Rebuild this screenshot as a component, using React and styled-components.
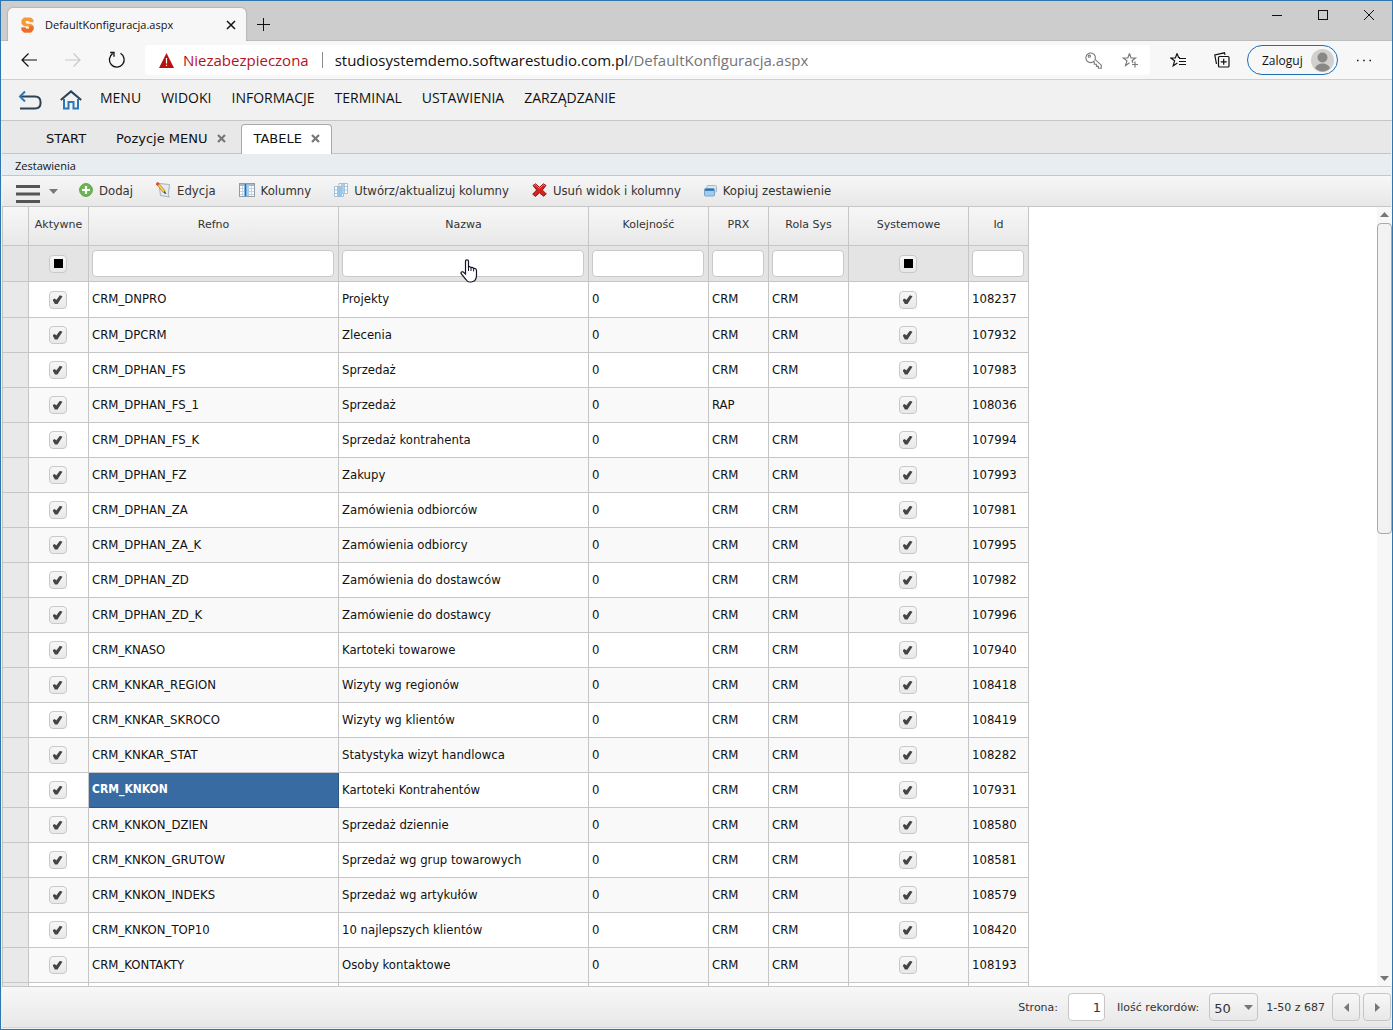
import React from 'react';
import styled, { createGlobalStyle, css } from 'styled-components';

const ui = '"Open Sans", "Noto Sans", sans-serif';
const grid = '"DejaVu Sans Condensed", "DejaVu Sans", sans-serif';
const wide = '"DejaVu Sans", sans-serif';
const line = '#c6c6c6';
const soft = 'linear-gradient(#f7f7f7, #e8e8e8)';

const Global = createGlobalStyle`
  * { box-sizing: border-box; }
  body { margin: 0; font-family: ${ui}; color: #111; }
  button, input, select { font: inherit; color: inherit; margin: 0; }
  button { padding: 0; border: 0; background: none; display: flex; align-items: center; }
  a { color: inherit; text-decoration: none; }
  svg { display: block; flex: none; }
`;

const Window = styled.div`
  display: flex;
  flex-direction: column;
  height: 100vh;
  min-height: 480px;
  overflow: hidden;
  border: 1px solid #2f76b0;
  background: #f0f0f0;
`;

/* ---------- browser frame ---------- */
const TitleBar = styled.header`
  display: flex;
  align-items: flex-end;
  height: 40px;
  flex: none;
  background: #cdcdcd;
  border-bottom: 1px solid #bdbdbd;
`;
const BrowserTab = styled.div`
  display: flex;
  align-items: center;
  width: 238px;
  height: 33px;
  margin: 0 0 -1px 7px;
  padding: 0 8px 0 13px;
  gap: 11px;
  border-radius: 5px 5px 0 0;
  background: #f7f7f7;
  box-shadow: 0 0 2px rgba(0, 0, 0, 0.35);
  clip-path: inset(-4px -4px 0 -4px);
  font-size: 11px;
`;
const TabTitle = styled.span`
  flex: 1;
  white-space: nowrap;
`;
const NewTab = styled.button`
  align-self: flex-end;
  height: 31px;
  margin-left: 11px;
`;
const WindowButtons = styled.div`
  display: flex;
  align-self: flex-start;
  margin-left: auto;
`;
const WindowButton = styled.button`
  justify-content: center;
  width: 46px;
  height: 28px;
`;
const AddressRow = styled.div`
  display: flex;
  align-items: center;
  height: 39px;
  flex: none;
  padding: 0 20px 0 0;
  background: #f7f7f7;
  border-bottom: 1px solid #cfcfcf;
`;
const NavButton = styled.button`
  justify-content: center;
  width: 44px;
  height: 30px;
  &:first-child { margin-left: 6px; }
`;
const AddressBar = styled.div`
  display: flex;
  align-items: center;
  flex: 1;
  height: 30px;
  margin-left: 6px;
  padding: 0 11px 0 14px;
  border-radius: 4px;
  background: #fff;
  font-size: 15px;
  white-space: nowrap;
`;
const Insecure = styled.button`
  gap: 9px;
  color: #b5121b;
`;
const Rule = styled.span`
  width: 1px;
  height: 16px;
  margin: 0 12px 0 13px;
  background: #8c8c8c;
`;
const Url = styled.div`
  flex: 1;
  outline: none;
  overflow: hidden;
`;
const UrlPath = styled.span`
  color: #757575;
`;
const BarIcons = styled.div`
  display: flex;
  align-items: center;
  gap: 20px;
`;
const SideIcons = styled(BarIcons)`
  gap: 28px;
  margin: 0 17px 0 20px;
`;
const SignIn = styled.button`
  justify-content: space-between;
  width: 91px;
  height: 30px;
  padding: 0 3px 0 14px;
  border: 1px solid #1d6cb0;
  border-radius: 15px;
  font-size: 12px;
`;
const More = styled.button`
  margin-left: 18px;
`;

/* ---------- application chrome ---------- */
const MenuBar = styled.nav`
  display: flex;
  align-items: center;
  height: 41px;
  flex: none;
  padding: 0 17px 4px;
  background: #f1f1f1;
  border-bottom: 1px solid ${line};
  font-size: 14px;
`;
const MenuIcon = styled.button`
  margin: 4px 18px 0 0;
`;
const MenuLinks = styled.div`
  display: flex;
  gap: 20px;
  padding-bottom: 2px;
`;
const Tabs = styled.div`
  display: flex;
  height: 33px;
  flex: none;
  padding: 3px 0 0 29px;
  margin: 0 1px;
  background: #e8e8e8;
  border-bottom: 1px solid ${line};
  font: 13px ${wide};
`;
const AppTab = styled.div`
  display: flex;
  align-items: center;
  gap: 9px;
  padding: 0 14px 3px;
  margin-bottom: -1px;
  border: 1px solid transparent;
  border-bottom: 0;
  ${(p) => p.$active && css`
    padding: 0 11px 3px 12px;
    border-color: #a9a9a9;
    border-radius: 4px 4px 0 0;
    background: #fff;
  `}
`;
const Crumb = styled.div`
  height: 22px;
  flex: none;
  margin: 0 1px;
  padding: 1px 13px 0;
  background: #e8edf2;
  border-bottom: 1px solid ${line};
  font-size: 11px;
  line-height: 21px;
`;
const Toolbar = styled.div`
  display: flex;
  align-items: center;
  height: 31px;
  flex: none;
  margin: 0 1px;
  padding: 0 14px;
  gap: 23px;
  background: ${soft};
  border-bottom: 1px solid ${line};
  font: 13px ${grid};
  color: #333;
`;
const ListButton = styled.button`
  gap: 9px;
  margin-right: -2px;
`;
const Tool = styled.button`
  gap: 6px;
  height: 28px;
  padding-bottom: 2px;
`;

/* ---------- grid ---------- */
const GridArea = styled.main`
  display: flex;
  flex: 1;
  min-height: 0;
  margin: 0 0 0 1px;
  background: #fff;
  border-left: 1px solid ${line};
`;
const TableScroll = styled.div`
  flex: 1;
  overflow: hidden;
`;
const Table = styled.table`
  width: 1026px;
  table-layout: fixed;
  border-collapse: separate;
  border-spacing: 0;
  font: 13px ${grid};
`;
const Col = styled.col`
  width: ${(p) => p.$w}px;
`;
const Th = styled.th`
  height: 39px;
  padding: 0 0 3px;
  border: solid ${line};
  border-width: 0 1px 1px 0;
  background: ${soft};
  font: 11px ${wide};
  color: #333;
`;
const FilterCell = styled.td`
  height: 36px;
  padding: 0 4px 0 3px;
  border: solid ${line};
  border-width: 0 1px 1px 0;
  background: #e4e4e4;
  text-align: center;
`;
const FilterInput = styled.input`
  display: block;
  width: 100%;
  height: 27px;
  padding: 0 5px;
  border: 1px solid #c9c9c9;
  border-radius: 4px;
  background: #fff;
`;
const Row = styled.tr`
  background: #fff;
  &:nth-child(even) { background: #f9f9f9; }
`;
const Cell = styled.td`
  height: 35px;
  padding: ${(p) => (p.$center ? '0 2px 0 0' : '0 3px 2px')};
  border: solid ${line};
  border-width: 0 1px 1px 0;
  white-space: nowrap;
  text-align: ${(p) => (p.$center ? 'center' : 'left')};
  ${Row}:first-child & { height: 36px; }
  ${(p) => p.$selected && css`
    background: #386ba1;
    border-color: #2c5684;
    color: #fff;
    font-weight: bold;
    font-size: 12px;
  `}
`;
const Marker = styled.td`
  background: #e9e9e9;
  border: solid ${line};
  border-width: 0 1px 1px 0;
`;
const Tick = styled.input.attrs({ type: 'checkbox' })`
  appearance: none;
  display: inline-grid;
  place-items: center;
  width: 18px;
  height: 18px;
  border: 1px solid #c9c9c9;
  border-radius: 4px;
  background: ${soft};
  vertical-align: middle;
  &::before {
    content: '';
    width: ${(p) => (p.$mixed ? 9 : 10)}px;
    height: 9px;
    background: ${(p) => (p.$mixed ? '#000' : '#444')};
  }
  &:checked::before {
    clip-path: polygon(0 54%, 22% 40%, 38% 56%, 74% 2%, 100% 14%, 50% 100%, 24% 100%);
  }
  &:not(:checked)::before { opacity: ${(p) => (p.$mixed ? 1 : 0)}; }
`;
const ScrollBar = styled.div`
  display: flex;
  flex-direction: column;
  align-items: center;
  width: 15px;
  padding: 5px 0;
  background: #f7f7f7;
`;
const Thumb = styled.div`
  width: 100%;
  height: 311px;
  margin: 6px 0 auto;
  border: 1px solid #a8a8a8;
  border-radius: 4px;
  background: #f2f2f2;
`;
const Pointer = styled.span`
  position: absolute;
  top: 9px;
  left: calc(50% - 3px);
  pointer-events: none;
`;
const PointerField = styled.div`
  position: relative;
`;

/* ---------- pager ---------- */
const Pager = styled.footer`
  display: flex;
  align-items: center;
  justify-content: flex-end;
  height: 42px;
  flex: none;
  margin: 0 1px 1px;
  gap: 3px;
  border-top: 1px solid ${line};
  border-bottom: 1px solid #d5d5d5;
  background: ${soft};
  font: 11px ${wide};
  color: #333;
`;
const PageLabel = styled.label`
  display: flex;
  align-items: center;
  gap: 10px;
  margin-right: 9px;
`;
const PageInput = styled.input`
  width: 37px;
  height: 28px;
  padding: 0 3px;
  border: 1px solid #c6c6c6;
  border-radius: 4px;
  background: #fff;
  font-size: 13px;
  text-align: right;
`;
const SizeBox = styled.span`
  display: grid;
  align-items: center;
  width: 49px;
  height: 28px;
  border: 1px solid #c6c6c6;
  border-radius: 4px;
  background: ${soft};
  & > * { grid-area: 1 / 1; }
  & > svg { justify-self: end; margin-right: 4px; pointer-events: none; }
`;
const SizeSelect = styled.select`
  appearance: none;
  width: 100%;
  height: 26px;
  padding: 3px 4px 0;
  border: 0;
  background: none;
  font-size: 13px;
`;
const Range = styled.span`
  margin: 0 4px 0 -4px;
`;
const PageButton = styled.button`
  justify-content: center;
  width: 28px;
  height: 28px;
  border: 1px solid #c6c6c6;
  border-radius: 4px;
  background: ${soft};
`;

/* ---------- icons ---------- */
const Icon = ({ w = 16, h = w, children, color = '#111', sw = 1 }) => (
  <svg width={w} height={h} viewBox={`0 0 ${w} ${h}`} fill="none" stroke={color} strokeWidth={sw} aria-hidden="true">{children}</svg>
);
const Arrow = ({ dir, w = 9, h = 5 }) => {
  const pts = { up: `0,${h} ${w / 2},0 ${w},${h}`, down: `0,0 ${w},0 ${w / 2},${h}`, left: `${w},0 ${w},${h} 0,${h / 2}`, right: `0,0 0,${h} ${w},${h / 2}` };
  return <Icon w={w} h={h}><polygon points={pts[dir]} fill="#777" stroke="none" /></Icon>;
};
const CloseMark = () => <Icon w={9} h={9} color="#777" sw={2.2}><path d="M1 1L8 8M8 1L1 8" /></Icon>;
const Logo = () => (
  <Icon w={13} h={16}>
    <path d="M3 0.5H10L12.5 3V5.2H8.6L8 4H4.8V6L6 6.7H10L12.5 9V12.8L10 15.5H3L0.5 13V10.4H4.4L5 11.8H8.2V10L7 9.2H3L0.5 6.8V3Z" fill="#f59a35" stroke="none" />
    <path d="M0.5 10.4H4.4L5 11.8H8.2V10L7 9.2H12.5V12.8L10 15.5H3L0.5 13Z" fill="#ee6b2c" stroke="none" />
  </Icon>
);
const star = 'M7.5 1.5L9 6H13.5L10 8.8L11 11M7.5 1.5L5.8 6H1.2L4.9 8.8L3.6 13.5L7.5 10.8';

const PlusIcon = () => (
  <Icon w={14} h={14}>
    <circle cx="7" cy="7" r="6.4" fill="#6cb552" stroke="#5ba34a" />
    <path d="M7 3V11M3 7H11" stroke="#fff" strokeWidth="2.2" />
  </Icon>
);
const EditIcon = () => (
  <Icon w={15} h={16}>
    <path d="M3 1.5L13.5 2.5L12.2 13L13.5 15L4.5 13.5Z" fill="#e4ebf2" stroke="#a3b1bf" />
    <path d="M1.5 1.5L8.5 10" stroke="#c98a1c" strokeWidth="3" />
    <path d="M2 2L8.5 10" stroke="#f8cf55" strokeWidth="1.8" />
    <path d="M0.6 0.8L2.6 3" stroke="#d9534a" strokeWidth="3" />
    <path d="M8 9.5L9.8 11.8" stroke="#4d4d4d" strokeWidth="1.4" />
  </Icon>
);
const ColumnsIcon = () => (
  <Icon w={16} h={14}>
    <rect x="0.5" y="0.5" width="15" height="13" fill="#fff" stroke="#8f9dab" />
    <path d="M1 2H15" stroke="#a9b7c4" strokeWidth="2" />
    <path d="M1 5.5H15M1 8.5H15M1 11.5H15M3.5 3V13M12.5 3V13" stroke="#c8d3dd" />
    <rect x="5" y="2" width="5" height="11" fill="#9fd0f2" stroke="none" />
    <path d="M6.5 1V13" stroke="#2b6fae" strokeWidth="1.6" />
  </Icon>
);
const BuildIcon = () => (
  <Icon w={14} h={14}>
    <path d="M5 0.5H13.5V10.5H9.5V13.5H0.5V3.5H5Z" fill="#fff" stroke="#a9bdcd" />
    <rect x="3.5" y="4" width="4" height="9.5" fill="#8fc6f0" stroke="none" />
    <rect x="7" y="1" width="4" height="9" fill="#a7d3f5" stroke="none" />
    <path d="M0.5 7H13M0.5 10.5H13M5 3.5H13M3.5 3.5V13.5M7.5 1V13.5M10.5 1V10" stroke="#a5c2da" />
  </Icon>
);
const DeleteIcon = () => (
  <Icon w={15} h={14}>
    <path d="M1 2.5L3.5 0.8L7.5 4.3L11.5 0.8L14 2.5L10.3 7L14.3 11L11.5 13.2L7.5 9.8L3.5 13.4L0.7 11.2L4.7 7Z" fill="#d3241f" stroke="#9c1512" />
    <path d="M2 2.6L3.5 1.8L7.5 5.4L11.5 1.8L12.9 2.6" stroke="#e88a86" />
  </Icon>
);
const CopyIcon = () => (
  <Icon w={13} h={13}>
    <rect x="3" y="1.5" width="9.5" height="6.5" rx="1" fill="#d6e6f3" stroke="#a3b8ca" />
    <rect x="0.5" y="4.5" width="10" height="7.5" rx="1" fill="#9fcdf0" stroke="#7aa6cb" />
    <path d="M1 5.8H10" stroke="#2f6ea8" strokeWidth="2" />
  </Icon>
);

/* ---------- data ---------- */
const menu = ['MENU', 'WIDOKI', 'INFORMACJE', 'TERMINAL', 'USTAWIENIA', 'ZARZĄDZANIE'];
const tools = [
  ['Dodaj', PlusIcon], ['Edycja', EditIcon], ['Kolumny', ColumnsIcon], ['Utwórz/aktualizuj kolumny', BuildIcon],
  ['Usuń widok i kolumny', DeleteIcon], ['Kopiuj zestawienie', CopyIcon],
];
const columns = [
  ['Aktywne', 60, 'check'], ['Refno', 250], ['Nazwa', 250], ['Kolejność', 120], ['PRX', 60], ['Rola Sys', 80],
  ['Systemowe', 120, 'check'], ['Id', 60],
];
const rows = [
  ['CRM_DNPRO', 'Projekty', '108237'], ['CRM_DPCRM', 'Zlecenia', '107932'], ['CRM_DPHAN_FS', 'Sprzedaż', '107983'],
  ['CRM_DPHAN_FS_1', 'Sprzedaż', '108036', 'RAP', ''], ['CRM_DPHAN_FS_K', 'Sprzedaż kontrahenta', '107994'],
  ['CRM_DPHAN_FZ', 'Zakupy', '107993'], ['CRM_DPHAN_ZA', 'Zamówienia odbiorców', '107981'],
  ['CRM_DPHAN_ZA_K', 'Zamówienia odbiorcy', '107995'], ['CRM_DPHAN_ZD', 'Zamówienia do dostawców', '107982'],
  ['CRM_DPHAN_ZD_K', 'Zamówienie do dostawcy', '107996'], ['CRM_KNASO', 'Kartoteki towarowe', '107940'],
  ['CRM_KNKAR_REGION', 'Wizyty wg regionów', '108418'], ['CRM_KNKAR_SKROCO', 'Wizyty wg klientów', '108419'],
  ['CRM_KNKAR_STAT', 'Statystyka wizyt handlowca', '108282'], ['CRM_KNKON', 'Kartoteki Kontrahentów', '107931'],
  ['CRM_KNKON_DZIEN', 'Sprzedaż dziennie', '108580'], ['CRM_KNKON_GRUTOW', 'Sprzedaż wg grup towarowych', '108581'],
  ['CRM_KNKON_INDEKS', 'Sprzedaż wg artykułów', '108579'], ['CRM_KNKON_TOP10', '10 najlepszych klientów', '108420'],
  ['CRM_KONTAKTY', 'Osoby kontaktowe', '108193'],
];
const selected = 'CRM_KNKON';

function BrowserFrame() {
  return (
    <>
      <TitleBar>
        <BrowserTab>
          <Logo />
          <TabTitle>DefaultKonfiguracja.aspx</TabTitle>
          <button aria-label="Zamknij kartę"><Icon w={14} h={14} sw={1.5}><path d="M3 3L11 11M11 3L3 11" /></Icon></button>
        </BrowserTab>
        <NewTab aria-label="Nowa karta"><Icon w={13} h={13}><path d="M6.5 0V13M0 6.5H13" /></Icon></NewTab>
        <WindowButtons>
          <WindowButton aria-label="Minimalizuj"><Icon w={10} h={10}><path d="M0 5.5H10" /></Icon></WindowButton>
          <WindowButton aria-label="Maksymalizuj"><Icon w={10} h={10}><rect x="0.5" y="0.5" width="9" height="9" /></Icon></WindowButton>
          <WindowButton aria-label="Zamknij"><Icon w={10} h={10}><path d="M0 0L10 10M10 0L0 10" /></Icon></WindowButton>
        </WindowButtons>
      </TitleBar>
      <AddressRow>
        <NavButton aria-label="Wstecz"><Icon w={16} h={14} sw={1.2}><path d="M16 7H1M7.5 0.5L1 7L7.5 13.5" /></Icon></NavButton>
        <NavButton aria-label="Dalej"><Icon w={16} h={14} color="#c9c9c9" sw={1.2}><path d="M0 7H15M8.5 0.5L15 7L8.5 13.5" /></Icon></NavButton>
        <NavButton aria-label="Odśwież"><Icon w={18} h={18} sw={1.3}><path d="M12.5 2.3A7.4 7.4 0 1 1 4.6 2.6M2.2 1.5H6V5.8" /></Icon></NavButton>
        <AddressBar>
          <Insecure>
            <Icon w={15} h={15}><path d="M7.5 0L15 15H0Z" fill="#b80f0f" stroke="none" /><path d="M7.5 5V10.5M7.5 11.7V13" stroke="#fff" strokeWidth="1.2" /></Icon>
            Niezabezpieczona
          </Insecure>
          <Rule />
          <Url role="textbox" aria-label="Adres" contentEditable suppressContentEditableWarning spellCheck={false}>
            studiosystemdemo.softwarestudio.com.pl<UrlPath>/DefaultKonfiguracja.aspx</UrlPath>
          </Url>
          <BarIcons>
            <button aria-label="Hasła"><Icon w={17} h={17} color="#7a7a7a" sw={1.1}><path d="M9.6 8.6A4.8 4.8 0 1 1 10.2 4.2Q10.6 5.6 10 7.4L16.3 13.2V16.3H13.4V14.4H11.4V12.3H9.3V10.2L8.2 9.4" /><circle cx="4.4" cy="4.2" r="1.1" /></Icon></button>
            <button aria-label="Dodaj do ulubionych"><Icon w={17} h={16} color="#7a7a7a" sw={1.2}><path d={star} /><path d="M13 9.5V15.5M10 12.5H16" /></Icon></button>
          </BarIcons>
        </AddressBar>
        <SideIcons>
          <button aria-label="Ulubione"><Icon w={16} h={16} sw={1.2}><path d="M7 1.5L8.6 5.5H10M7 1.5L5.4 6H0.8L4.6 8.8L3.2 13.8L7.4 11" /><path d="M9 6.5H16M9 9.5H16M9 12.5H16" /></Icon></button>
          <button aria-label="Kolekcje"><Icon w={16} h={16} sw={1.2}><path d="M2.5 12L0.8 3L10.5 0.8L11 2.8" /><rect x="4.5" y="4.5" width="10.5" height="10.5" rx="1" /><path d="M9.7 6.8V12.8M6.7 9.8H12.7" /></Icon></button>
        </SideIcons>
        <SignIn>
          Zaloguj
          <Icon w={23} h={23}>
            <circle cx="11.5" cy="11.5" r="11.5" fill="#d2d0ce" stroke="none" />
            <circle cx="11.5" cy="8.5" r="5" fill="#8a8886" stroke="none" />
            <path d="M4 19Q6 14.5 11.5 14.5Q17 14.5 19 19Q16 22.4 11.5 22.4Q7 22.4 4 19Z" fill="#8a8886" stroke="none" />
          </Icon>
        </SignIn>
        <More aria-label="Więcej"><Icon w={16} h={16}><path d="M1 8.5H2.5M7.2 8.5H8.7M13.5 8.5H15" strokeWidth="1.5" /></Icon></More>
      </AddressRow>
    </>
  );
}

function AppHeader() {
  return (
    <>
      <MenuBar>
        <MenuIcon aria-label="Cofnij">
          <Icon w={24} h={20} color="#2c4256" sw={2}><path d="M3 6.5H17Q22.6 6.5 22.6 12.5T17 18.5H2" /><path d="M7 1.5L2 6.5L7 11.5" stroke="#2b78b8" /></Icon>
        </MenuIcon>
        <MenuIcon aria-label="Strona główna">
          <Icon w={22} h={20} color="#2b78b8" sw={2}><path d="M4 9V18.5H8.5V12H13.5V18.5H18V9" /><path d="M0.8 10L11 1.4L21.2 10" stroke="#2c4256" /></Icon>
        </MenuIcon>
        <MenuLinks>{menu.map((m) => <a key={m} href={`#${m}`}>{m}</a>)}</MenuLinks>
      </MenuBar>
      <Tabs>
        <AppTab><a href="#start">START</a></AppTab>
        <AppTab><a href="#pozycje">Pozycje MENU</a><button aria-label="Zamknij Pozycje MENU"><CloseMark /></button></AppTab>
        <AppTab $active><a href="#tabele">TABELE</a><button aria-label="Zamknij TABELE"><CloseMark /></button></AppTab>
      </Tabs>
      <Crumb>Zestawienia</Crumb>
      <Toolbar>
        <ListButton aria-label="Opcje listy">
          <Icon w={24} h={24} color="#555" sw={3}><path d="M0 7.5H24M0 15H24M0 22.5H24" /></Icon>
          <Arrow dir="down" />
        </ListButton>
        {tools.map(([label, ToolIcon]) => <Tool key={label}><ToolIcon />{label}</Tool>)}
      </Toolbar>
    </>
  );
}

function Filter({ name, type }) {
  if (type === 'check') return <Tick $mixed aria-label={`Filtr ${name}`} />;
  const input = <FilterInput type="text" aria-label={`Filtr ${name}`} />;
  if (name !== 'Nazwa') return input;
  return (
    <PointerField>
      {input}
      <Pointer>
        <Icon w={18} h={24}>
          <path d="M5.5 15V2.5Q5.5 0.8 7 0.8T8.5 2.5V8Q9.5 7 11 8.6Q12.5 7.8 13.6 9.4Q16.5 9 16.5 12V17Q16 22.8 11 23H9.5Q7.5 23 6 20.5L1 14.5Q0.8 12.4 3 12.8L5.5 15Z" fill="#fff" stroke="#15152a" strokeWidth="1.2" />
          <path d="M8.5 8V12M11 9V12M13.6 10V12.4" stroke="#15152a" />
        </Icon>
      </Pointer>
    </PointerField>
  );
}

function DataRow({ row }) {
  const [refno, name, id, prx = 'CRM', role = 'CRM'] = row;
  return (
    <Row>
      <Marker />
      <Cell $center><Tick defaultChecked aria-label={`Aktywne ${refno}`} /></Cell>
      <Cell $selected={refno === selected}>{refno}</Cell>
      <Cell>{name}</Cell>
      <Cell>0</Cell>
      <Cell>{prx}</Cell>
      <Cell>{role}</Cell>
      <Cell $center><Tick defaultChecked aria-label={`Systemowe ${refno}`} /></Cell>
      <Cell>{id}</Cell>
    </Row>
  );
}

export default function App() {
  return (
    <Window>
      <Global />
      <BrowserFrame />
      <AppHeader />
      <GridArea>
        <TableScroll>
          <Table>
            <colgroup>
              <Col $w={26} />
              {columns.map(([name, w]) => <Col key={name} $w={w} />)}
            </colgroup>
            <thead>
              <tr><Th />{columns.map(([name]) => <Th key={name} scope="col">{name}</Th>)}</tr>
              <tr><FilterCell />{columns.map(([name, , type]) => <FilterCell key={name}><Filter name={name} type={type} /></FilterCell>)}</tr>
            </thead>
            <tbody>
              {rows.map((row) => <DataRow key={row[0]} row={row} />)}
              <Row><Marker /><Cell /><Cell /><Cell /><Cell /><Cell /><Cell /><Cell /><Cell /></Row>
            </tbody>
          </Table>
        </TableScroll>
        <ScrollBar>
          <Arrow dir="up" />
          <Thumb />
          <Arrow dir="down" />
        </ScrollBar>
      </GridArea>
      <Pager>
        <PageLabel>Strona: <PageInput type="text" defaultValue="1" /></PageLabel>
        <PageLabel>
          Ilość rekordów:
          <SizeBox><SizeSelect defaultValue="50"><option>50</option><option>100</option></SizeSelect><Arrow dir="down" /></SizeBox>
        </PageLabel>
        <Range>1-50 z 687</Range>
        <PageButton aria-label="Poprzednia strona"><Arrow dir="left" w={5} h={9} /></PageButton>
        <PageButton aria-label="Następna strona"><Arrow dir="right" w={5} h={9} /></PageButton>
      </Pager>
    </Window>
  );
}
